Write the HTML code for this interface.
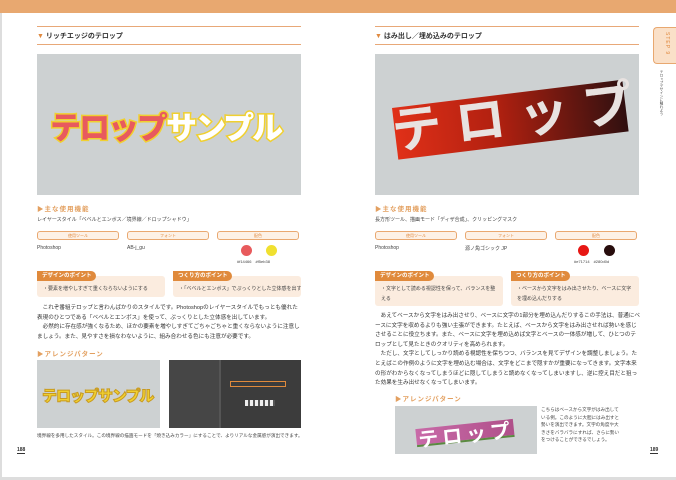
<!DOCTYPE html>
<html><head><meta charset="utf-8"><style>
*{margin:0;padding:0;box-sizing:border-box}
body{width:676px;height:480px;background:#fff;position:relative;overflow:hidden;font-family:"Liberation Sans","Noto Sans CJK JP",sans-serif;color:#333}
.a{position:absolute}
.bar{left:0;top:0;width:676px;height:13px;background:#e8a870}
.hl{height:1px;background:#e8a878}
.ttl{font-size:7px;font-weight:bold;color:#333}
.ttl b{color:#e08a40}
.img{background:#cdd1d2}
.sub{font-size:6.5px;font-weight:bold;color:#e3a060;letter-spacing:1px}
.t{font-size:5px;color:#444;white-space:nowrap}
.pill{height:9px;border:1px solid #e9a870;border-radius:3px;background:#fdf1e6;font-size:4px;color:#e08a40;text-align:center;line-height:7px}
.lbl{height:10px;background:#e08a3c;border-radius:0 5px 5px 0;color:#fff;font-size:5.5px;font-weight:bold;line-height:10px;padding-left:5px}
.box{background:#fbecdf;border-radius:3px;font-size:5px;padding:8px 5px 0 6px;line-height:10px;color:#444;white-space:normal}
.nw{white-space:nowrap;overflow:hidden}
.body{font-size:5.6px;line-height:9.6px;color:#333}
.body p{text-indent:1em}
.pn{font-size:5px;font-weight:bold;border-bottom:1px solid #333}
</style></head><body>
<div class="a bar"></div>
<div class="a" style="left:0;top:13px;width:2px;height:465px;background:#ddd"></div>
<div class="a" style="left:0;top:477px;width:676px;height:3px;background:#ddd"></div>

<!-- LEFT PAGE -->
<div class="a hl" style="left:37px;top:26px;width:264px"></div>
<div class="a hl" style="left:37px;top:44px;width:264px"></div>
<div class="a ttl" style="left:37px;top:31px"><b>▼</b> リッチエッジのテロップ</div>
<div class="a img" style="left:37px;top:54px;width:264px;height:141px"></div>
<div class="a" style="left:50px;top:103px;font-size:31px;font-weight:900;letter-spacing:-2px;white-space:nowrap;-webkit-text-stroke:3px #f0d030;paint-order:stroke fill"><span style="color:#e85a5e">テロップ</span><span style="color:#fff">サンプル</span></div>
<div class="a sub" style="left:37px;top:203px">▶主な使用機能</div>
<div class="a t" style="left:37px;top:216px">レイヤースタイル「ベベルとエンボス／境界線／ドロップシャドウ」</div>
<div class="a pill" style="left:37px;top:231px;width:82px">使用ツール</div>
<div class="a pill" style="left:127px;top:231px;width:82px">フォント</div>
<div class="a pill" style="left:217px;top:231px;width:82px">配色</div>
<div class="a t" style="left:37px;top:245px">Photoshop</div>
<div class="a t" style="left:127px;top:245px">AB-j_gu</div>
<div class="a" style="left:241px;top:245px;width:11px;height:11px;border-radius:50%;background:#e85a5c"></div>
<div class="a" style="left:266px;top:245px;width:11px;height:11px;border-radius:50%;background:#f0e030"></div>
<div class="a t" style="left:237px;top:259px;font-size:4px">#f14466　#f5eb38</div>
<div class="a box nw" style="left:37px;top:276px;width:128px;height:21px">・要素を増やしすぎて重くならないようにする</div>
<div class="a box nw" style="left:173px;top:276px;width:128px;height:21px">・「ベベルとエンボス」でぷっくりとした立体感を出す</div>
<div class="a lbl" style="left:37px;top:271px;width:59px">デザインのポイント</div>
<div class="a lbl" style="left:173px;top:271px;width:59px">つくり方のポイント</div>
<div class="a body" style="left:37px;top:304px;width:266px">
<p>これぞ番組テロップと言わんばかりのスタイルです。Photoshopのレイヤースタイルでもっとも優れた表現のひとつである「ベベルとエンボス」を使って、ぷっくりとした立体感を出しています。</p>
<p>必然的に存在感が強くなるため、ほかの要素を増やしすぎてごちゃごちゃと重くならないように注意しましょう。また、見やすさを損なわないように、組み合わせる色にも注意が必要です。</p></div>
<div class="a sub" style="left:37px;top:348px">▶アレンジパターン</div>
<div class="a img" style="left:37px;top:360px;width:123px;height:68px"></div>
<div class="a" style="left:42px;top:385px;font-size:15px;font-weight:900;color:#f0d030;white-space:nowrap;letter-spacing:-1px;-webkit-text-stroke:1px #c89a20">テロップサンプル</div>
<div class="a" style="left:169px;top:360px;width:132px;height:68px;background:#3c3c3c"></div>
<div class="a" style="left:169px;top:360px;width:52px;height:68px;background:#464646;border-right:2px solid #555"></div>
<div class="a" style="left:230px;top:381px;width:56px;height:6px;border:1px solid #e08a3c"></div>
<div class="a" style="left:245px;top:400px;width:30px;height:6px;background:repeating-linear-gradient(90deg,#eee 0 3px,#555 3px 5px)"></div>
<div class="a t" style="left:37px;top:433px;font-size:4.6px">境界線を多用したスタイル。この境界線の描画モードを「焼き込みカラー」にすることで、よりリアルな金属感が演出できます。</div>
<div class="a pn" style="left:17px;top:447px">188</div>

<!-- RIGHT PAGE -->
<div class="a hl" style="left:375px;top:26px;width:264px"></div>
<div class="a hl" style="left:375px;top:44px;width:264px"></div>
<div class="a ttl" style="left:375px;top:31px"><b>▼</b> はみ出し／埋め込みのテロップ</div>
<div class="a" style="left:653px;top:27px;width:23px;height:37px;background:#fae0c8;border:1px solid #e8a870;border-right:none;border-radius:4px 0 0 4px;writing-mode:vertical-rl;font-size:5px;color:#e08a40;padding:4px 6px;letter-spacing:1px">STEP 9</div>
<div class="a" style="left:660px;top:70px;writing-mode:vertical-rl;font-size:3.5px;color:#444">テロップデザインに触れよう</div>
<div class="a img" style="left:375px;top:54px;width:264px;height:141px"></div>
<div class="a" style="left:392px;top:108px;width:232px;height:52px;transform:rotate(-7deg);transform-origin:0 0;background:linear-gradient(90deg,#e03018,#b02010 45%,#301010)"></div>
<div class="a" style="left:396px;top:92px;font-size:50px;font-weight:bold;color:#e8e2e0;white-space:nowrap;letter-spacing:14px;transform:rotate(-7deg);transform-origin:0 100%">テロップ</div>
<div class="a sub" style="left:375px;top:203px">▶主な使用機能</div>
<div class="a t" style="left:375px;top:216px">長方形ツール、描画モード「ディザ合成」、クリッピングマスク</div>
<div class="a pill" style="left:375px;top:231px;width:82px">使用ツール</div>
<div class="a pill" style="left:465px;top:231px;width:82px">フォント</div>
<div class="a pill" style="left:555px;top:231px;width:82px">配色</div>
<div class="a t" style="left:375px;top:245px">Photoshop</div>
<div class="a t" style="left:465px;top:245px">源ノ角ゴシック JP</div>
<div class="a" style="left:578px;top:245px;width:11px;height:11px;border-radius:50%;background:#e71714"></div>
<div class="a" style="left:604px;top:245px;width:11px;height:11px;border-radius:50%;background:#280d0d"></div>
<div class="a t" style="left:574px;top:259px;font-size:4px">#e71714　#280d0d</div>
<div class="a box" style="left:375px;top:276px;width:128px;height:30px">・文字として読める視認性を保って、バランスを整える</div>
<div class="a box" style="left:511px;top:276px;width:128px;height:30px">・ベースから文字をはみ出させたり、ベースに文字を埋め込んだりする</div>
<div class="a lbl" style="left:375px;top:271px;width:59px">デザインのポイント</div>
<div class="a lbl" style="left:511px;top:271px;width:59px">つくり方のポイント</div>
<div class="a body" style="left:375px;top:312px;width:266px">
<p>あえてベースから文字をはみ出させり、ベースに文字の1部分を埋め込んだりするこの手法は、普通にベースに文字を収めるよりも強い主張ができます。たとえば、ベースから文字をはみ出させれば勢いを感じさせることに役立ちます。また、ベースに文字を埋め込めば文字とベースの一体感が増して、ひとつのテロップとして見たときのクオリティを高められます。</p>
<p>ただし、文字としてしっかり読める視認性を保ちつつ、バランスを見てデザインを調整しましょう。たとえばこの作例のように文字を埋め込む場合は、文字をどこまで隠すかが重要になってきます。文字本来の形がわからなくなってしまうほどに隠してしまうと読めなくなってしまいますし、逆に控え目だと狙った効果を生み出せなくなってしまいます。</p></div>
<div class="a sub" style="left:395px;top:393px">▶アレンジパターン</div>
<div class="a img" style="left:395px;top:406px;width:142px;height:48px"></div>
<div class="a" style="left:416px;top:424px;width:98px;height:18px;transform:rotate(-6deg);background:linear-gradient(90deg,#c86aa8,#b0508a);border-bottom:2px solid #5a8a40"></div>
<div class="a" style="left:418px;top:419px;font-size:20px;font-weight:bold;color:#fff;white-space:nowrap;letter-spacing:4px;transform:rotate(-6deg)">テロップ</div>
<div class="a" style="left:541px;top:406px;width:82px;font-size:4.6px;line-height:7.6px;color:#444">こちらはベースから文字がはみ出している例。このように大胆にはみ出すと勢いを演出できます。文字の角度や大きさをバラバラにすれば、さらに勢いをつけることができるでしょう。</div>
<div class="a pn" style="left:650px;top:447px">189</div>
</body></html>
